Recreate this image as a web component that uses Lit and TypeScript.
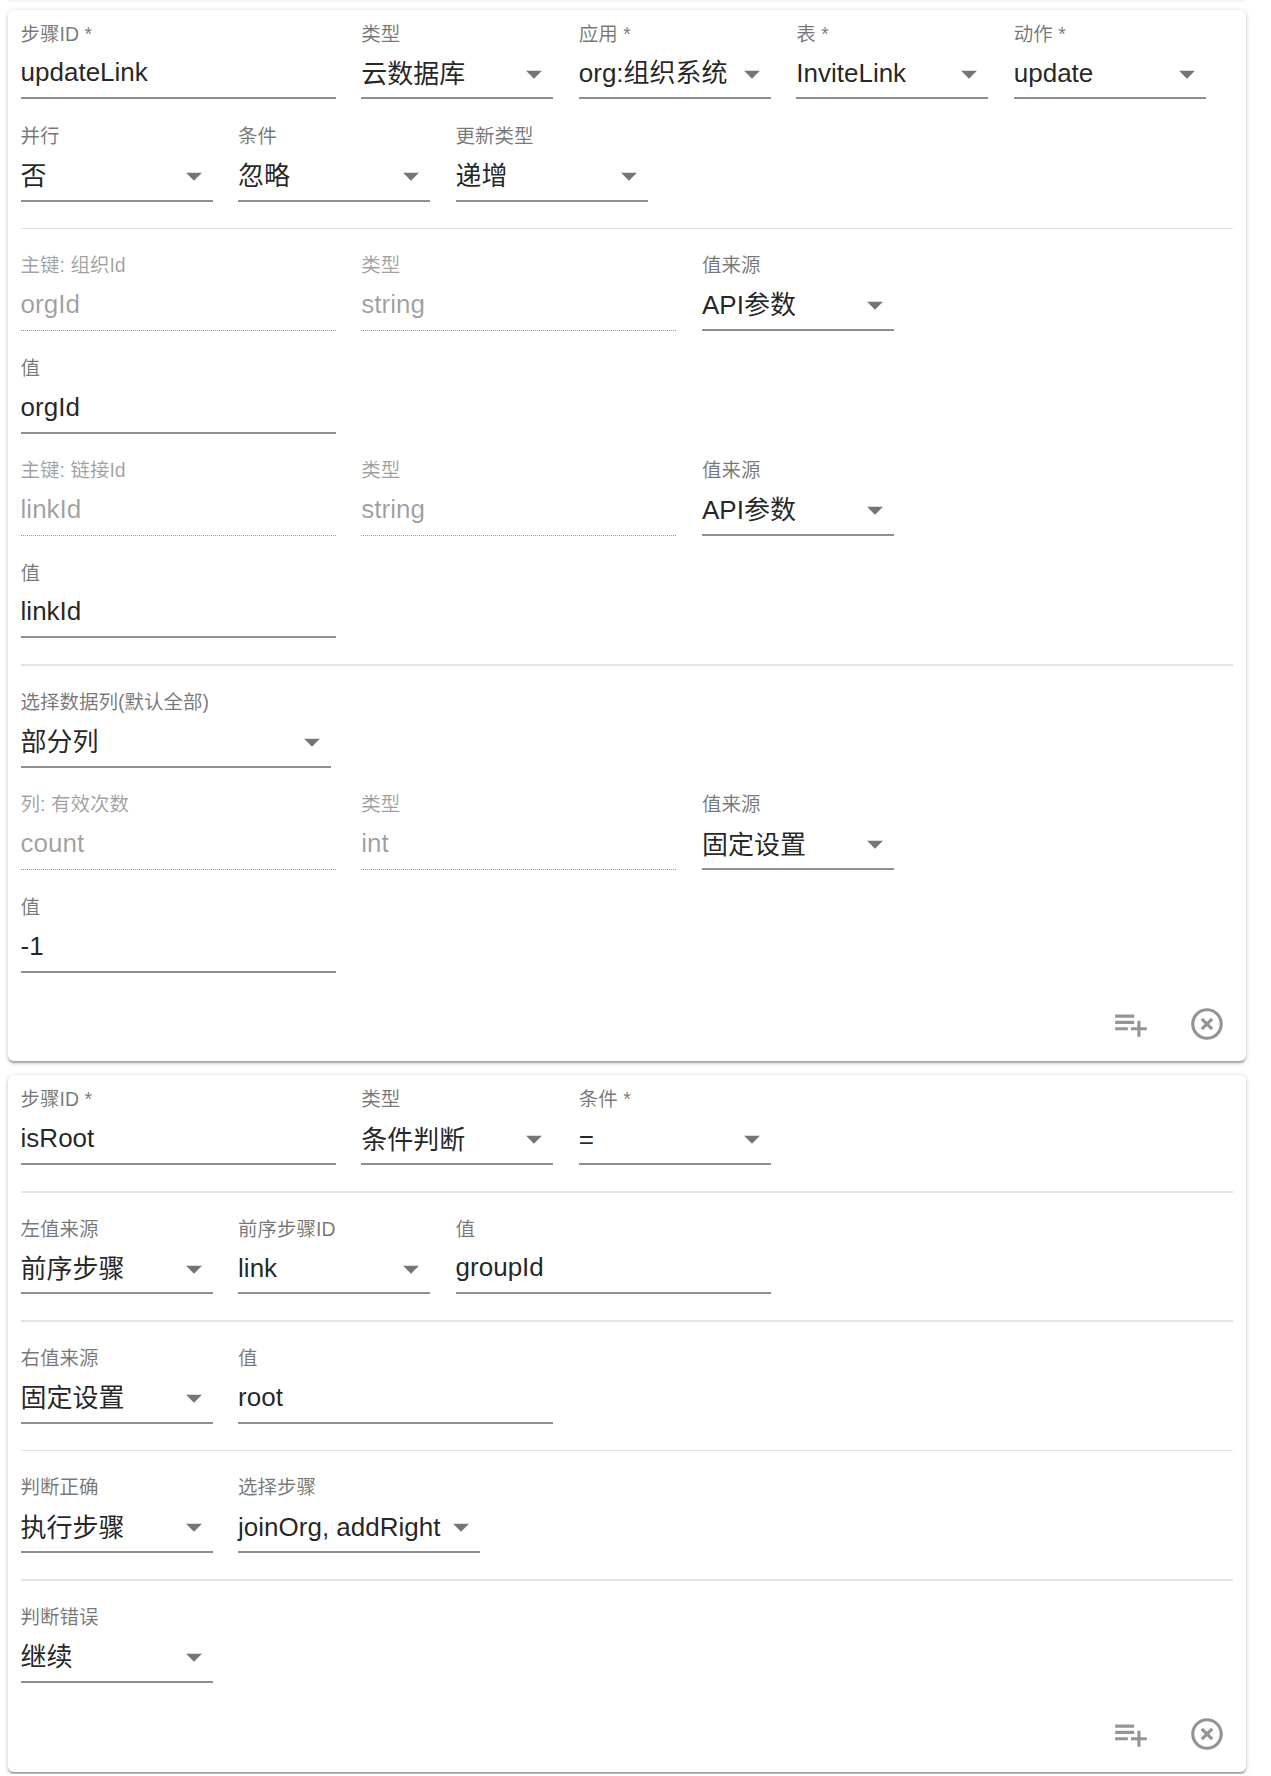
import { LitElement, html, css, svg } from "lit";
import { customElement } from "lit/decorators.js";

type Size = "lg" | "sm" | "md" | "auto";
const arrow = html`<svg class="arrow" viewBox="0 0 24 24"><path d="M7 10l5 5 5-5z"></path></svg>`;
const field = (label: string, value: string, size: Size = "sm", kind: "select" | "text" | "off" = "select") => html`
  <div class="field ${size} ${kind}">
    <div class="label">${label}</div>
    <div class="input"><span class="value ${/^[\u4e00-\u9fff]/.test(value) ? "cjk" : ""}">${value}</span>${kind === "select" ? arrow : ""}</div>
  </div>`;
const text = (l: string, v: string) => field(l, v, "lg", "text");
const off = (l: string, v: string) => field(l, v, "lg", "off");
const actions = html`
  <div class="actions">
    <button class="icon" aria-label="add"><svg viewBox="0 0 24 24">${svg`<path d="M14 10H2v2h12v-2zm0-4H2v2h12V6zm4 8v-4h-2v4h-4v2h4v4h2v-4h4v-2h-4zM2 16h8v-2H2v2z"></path>`}</svg></button>
    <button class="icon" aria-label="remove"><svg viewBox="0 0 24 24">${svg`<path d="M14.59 8L12 10.59 9.41 8 8 9.41 10.59 12 8 14.59 9.41 16 12 13.41 14.59 16 16 14.59 13.41 12 16 9.41 14.59 8zM12 2C6.47 2 2 6.47 2 12s4.47 10 10 10 10-4.47 10-10S17.53 2 12 2zm0 18c-4.41 0-8-3.59-8-8s3.59-8 8-8 8 3.59 8 8-3.59 8-8 8z"></path>`}</svg></button>
  </div>`;

@customElement("app-root")
export class AppRoot extends LitElement {
  static styles = css`
    :host { display: block; font-family: "Liberation Sans", "Noto Sans CJK SC", sans-serif; background: #fff; padding: 0 25px 2px 8px; }
    .edge { height: 2px; background: #f6f6f6; margin-bottom: 7.6px; }
    .card { background: #fff; border-radius: 6px; padding: 14px 12.6px 0; margin-bottom: 14px;
      box-shadow: 0 1.6px 5px rgba(0,0,0,.2), 0 1.6px 1.6px rgba(0,0,0,.14), 0 3px 1.6px -1.6px rgba(0,0,0,.12); }
    .card:last-child { margin-bottom: 0; padding-bottom: 1px; }
    .rows { display: flex; flex-direction: column; gap: 26.6px; }
    .row { display: flex; gap: 25.5px; }
    hr { border: 0; height: 1.6px; background: #e4e4e4; margin: 26px 0; }
    .field { height: 75.8px; display: flex; flex-direction: column; box-sizing: border-box; flex: none; }
    .lg { width: 315.2px; }
    .sm { width: 192px; }
    .md { width: 310px; }
    .auto { width: 242px; }
    .label { font-size: 19.5px; line-height: 21px; height: 22px; color: rgba(0,0,0,.54); white-space: nowrap; }
    .input { flex: 1; display: flex; align-items: center; justify-content: space-between; font-size: 26px; color: rgba(0,0,0,.87);
      border-bottom: 2px solid #8e8e8e; padding-top: 2px; position: relative; white-space: nowrap; }
    .value { display: block; height: 30px; line-height: 30px; }
    .select .value { padding-top: 2px; }
    .value.cjk { padding-top: 3px; }
    .arrow { width: 38px; height: 38px; fill: rgba(0,0,0,.54); flex: none; position: absolute; right: 0; top: 9px; }
    .off .label { color: rgba(0,0,0,.38); }
    .off .input { color: rgba(0,0,0,.38); border-bottom: 1px dotted rgba(0,0,0,.42); padding-bottom: 2px; }
    .actions { display: flex; justify-content: flex-end; margin: 13.7px -11.6px 0 0; }
    .icon { width: 76px; height: 75px; padding: 19px 19px 18px; border: 0; background: none; display: block; }
    .icon svg { display: block; width: 38px; height: 38px; fill: rgba(0,0,0,.42); }
  `;
  render() {
    return html`
      <div class="edge"></div>
      <section class="card">
        <div class="rows">
          <div class="row">
            ${text("步骤ID *", "updateLink")}
            ${field("类型", "云数据库")}
            ${field("应用 *", "org:组织系统")}
            ${field("表 *", "InviteLink")}
            ${field("动作 *", "update")}
          </div>
          <div class="row">
            ${field("并行", "否")}
            ${field("条件", "忽略")}
            ${field("更新类型", "递增")}
          </div>
        </div>
        <hr />
        <div class="rows">
          <div class="row">${off("主键: 组织Id", "orgId")}${off("类型", "string")}${field("值来源", "API参数")}</div>
          <div class="row">${text("值", "orgId")}</div>
          <div class="row">${off("主键: 链接Id", "linkId")}${off("类型", "string")}${field("值来源", "API参数")}</div>
          <div class="row">${text("值", "linkId")}</div>
        </div>
        <hr />
        <div class="rows">
          <div class="row">${field("选择数据列(默认全部)", "部分列", "md")}</div>
          <div class="row">${off("列: 有效次数", "count")}${off("类型", "int")}${field("值来源", "固定设置")}</div>
          <div class="row">${text("值", "-1")}</div>
        </div>
        ${actions}
      </section>
      <section class="card">
        <div class="row">${text("步骤ID *", "isRoot")}${field("类型", "条件判断")}${field("条件 *", "=")}</div>
        <hr />
        <div class="row">${field("左值来源", "前序步骤")}${field("前序步骤ID", "link")}${text("值", "groupId")}</div>
        <hr />
        <div class="row">${field("右值来源", "固定设置")}${text("值", "root")}</div>
        <hr />
        <div class="row">${field("判断正确", "执行步骤")}${field("选择步骤", "joinOrg, addRight", "auto")}</div>
        <hr />
        <div class="row">${field("判断错误", "继续")}</div>
        ${actions}
      </section>
    `;
  }
}
